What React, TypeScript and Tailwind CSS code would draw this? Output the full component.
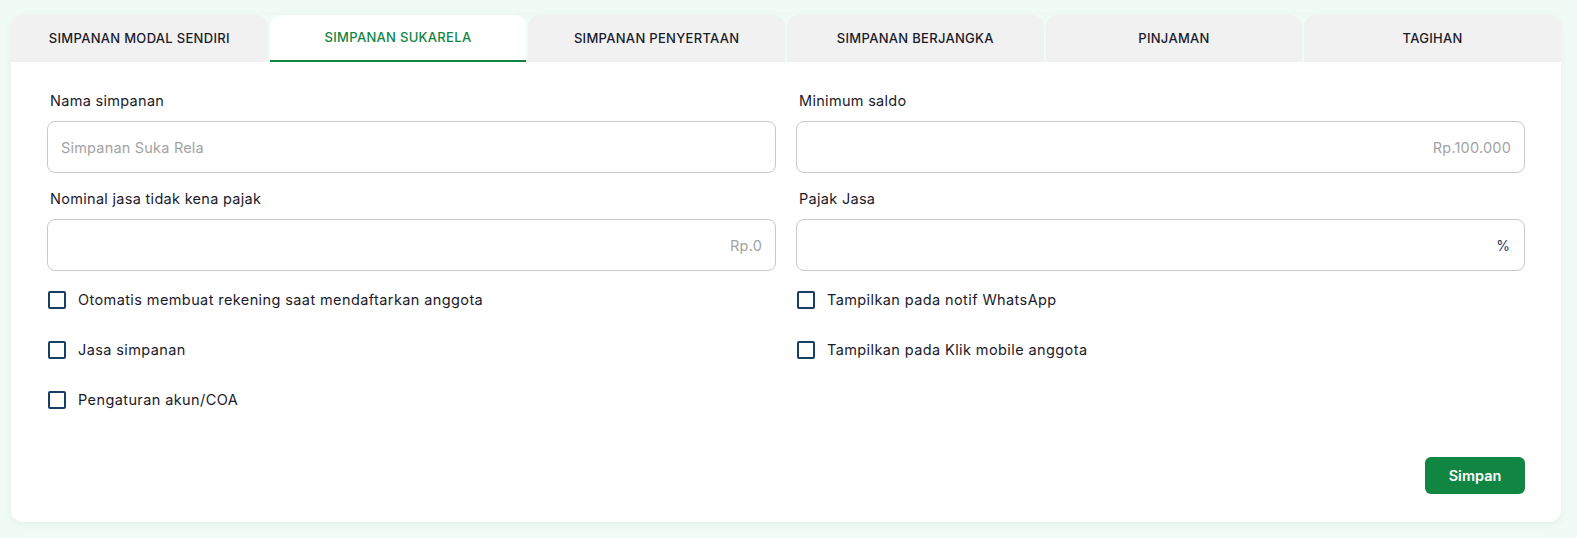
import { useState } from "react"

const tabs = [
    "SIMPANAN MODAL SENDIRI",
    "SIMPANAN SUKARELA",
    "SIMPANAN PENYERTAAN",
    "SIMPANAN BERJANGKA",
    "PINJAMAN",
    "TAGIHAN",
]

function Field({ label, placeholder, suffix, right }: { label: string; placeholder?: string; suffix?: string; right?: boolean }) {
    return (
        <div className="flex flex-col">
            <label className="pl-[3px] text-[14.5px] tracking-[0.3px] leading-[20px] text-[#1b1b2b] mt-[1px] mb-[10px]">{label}</label>
            <div className="relative h-[52px] rounded-[8px] border border-[#c9c9c9] bg-white">
                <input
                    className={`h-full w-full rounded-[8px] bg-transparent outline-none text-[14.5px] tracking-[0.2px] px-[13px] placeholder:text-[#a3a3a3] ${right ? "text-right" : ""} ${suffix ? "pr-[36px]" : ""}`}
                    placeholder={placeholder}
                />
                {suffix && (
                    <span className="absolute right-[14px] top-1/2 -translate-y-1/2 text-[14px] text-[#1e3a5f]">{suffix}</span>
                )}
            </div>
        </div>
    )
}

function Check({ label }: { label: string }) {
    const [on, setOn] = useState(false)
    return (
        <label className="flex items-center h-[24px] gap-[12px] pl-[1px] cursor-pointer" onClick={() => setOn(!on)}>
            <span className={`w-[18px] h-[18px] rounded-[2px] border-2 border-[#173f63] ${on ? "bg-[#173f63]" : "bg-white"}`} />
            <span className="text-[14.5px] tracking-[0.4px] text-[#1b1b2b]">{label}</span>
        </label>
    )
}

export default function App() {
    const [active, setActive] = useState(1)

    return (
        <div
            className="min-h-screen bg-[#f0fbf5] pl-[11px] pt-[15px]"
            style={{ fontFamily: "Inter, 'Noto Sans', sans-serif" }}
        >
            <div className="w-[1550px] rounded-xl shadow-[0_2px_8px_rgba(0,0,0,0.05)]">
                {/* Tabs */}
                <div className="grid grid-cols-6 gap-[2px]">
                    {tabs.map((t, i) => (
                        <button
                            key={t}
                            onClick={() => setActive(i)}
                            className={`h-[47px] rounded-t-[12px] flex items-center justify-center text-[13px] tracking-[0.3px] font-medium ${
                                i === active
                                    ? "bg-white text-[#118643] border-b-2 border-[#118643]"
                                    : "bg-[#f1f1f1] text-[#1b1b2b]"
                            }`}
                        >
                            {t}
                        </button>
                    ))}
                </div>

                {/* Body */}
                <div className="bg-white rounded-b-xl px-[36px] pt-[28px] pb-[28px]">
                    <div className="grid grid-cols-2 gap-x-[20px] gap-y-[15px]">
                        <Field label="Nama simpanan" placeholder="Simpanan Suka Rela" />
                        <Field label="Minimum saldo" placeholder="Rp.100.000" right />
                        <Field label="Nominal jasa tidak kena pajak" placeholder="Rp.0" right />
                        <Field label="Pajak Jasa" suffix="%" />
                    </div>

                    <div className="grid grid-cols-2 gap-x-[20px] mt-[17px]">
                        <div className="flex flex-col gap-[26px]">
                            <Check label="Otomatis membuat rekening saat mendaftarkan anggota" />
                            <Check label="Jasa simpanan" />
                            <Check label="Pengaturan akun/COA" />
                        </div>
                        <div className="flex flex-col gap-[26px]">
                            <Check label="Tampilkan pada notif WhatsApp" />
                            <Check label="Tampilkan pada Klik mobile anggota" />
                        </div>
                    </div>

                    <div className="flex justify-end mt-[45px]">
                        <button className="w-[100px] h-[37px] rounded-[6px] bg-[#118643] text-white text-[14.5px] font-semibold">
                            Simpan
                        </button>
                    </div>
                </div>
            </div>
        </div>
    )
}
